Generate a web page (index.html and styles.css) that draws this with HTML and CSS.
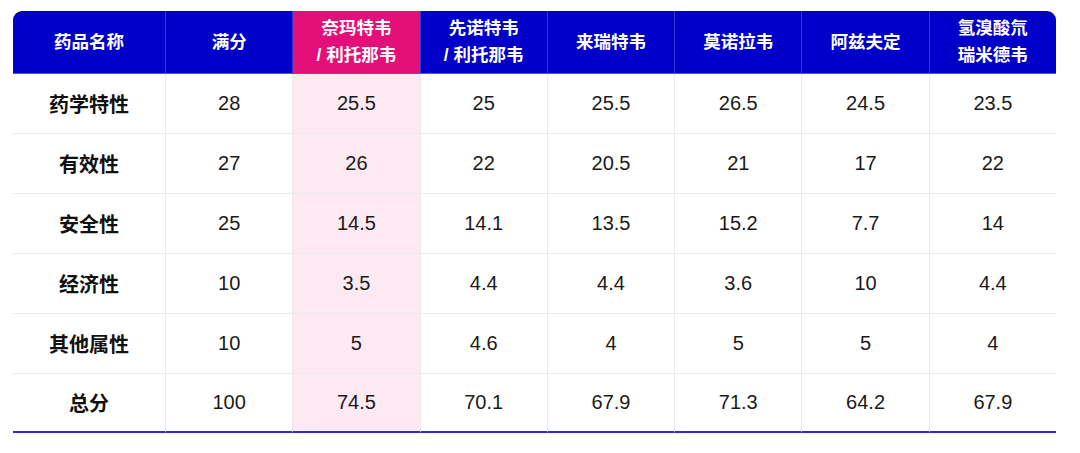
FILE: index.html
```html
<!DOCTYPE html>
<html lang="zh">
<head>
<meta charset="utf-8">
<title>药品评分</title>
<link rel="stylesheet" href="styles.css">
</head>
<body>
<div class="wrap">
<table class="score">
  <colgroup>
    <col class="c-name">
    <col span="7" class="c-val">
  </colgroup>
  <thead>
    <tr>
      <th>药品名称</th>
      <th>满分</th>
      <th class="hl">奈玛特韦<br>/ 利托那韦</th>
      <th>先诺特韦<br>/ 利托那韦</th>
      <th>来瑞特韦</th>
      <th>莫诺拉韦</th>
      <th>阿兹夫定</th>
      <th>氢溴酸氘<br>瑞米德韦</th>
    </tr>
  </thead>
  <tbody>
    <tr><th>药学特性</th><td>28</td><td class="hl">25.5</td><td>25</td><td>25.5</td><td>26.5</td><td>24.5</td><td>23.5</td></tr>
    <tr><th>有效性</th><td>27</td><td class="hl">26</td><td>22</td><td>20.5</td><td>21</td><td>17</td><td>22</td></tr>
    <tr><th>安全性</th><td>25</td><td class="hl">14.5</td><td>14.1</td><td>13.5</td><td>15.2</td><td>7.7</td><td>14</td></tr>
    <tr><th>经济性</th><td>10</td><td class="hl">3.5</td><td>4.4</td><td>4.4</td><td>3.6</td><td>10</td><td>4.4</td></tr>
    <tr><th>其他属性</th><td>10</td><td class="hl">5</td><td>4.6</td><td>4</td><td>5</td><td>5</td><td>4</td></tr>
    <tr><th>总分</th><td>100</td><td class="hl">74.5</td><td>70.1</td><td>67.9</td><td>71.3</td><td>64.2</td><td>67.9</td></tr>
  </tbody>
</table>
</div>
</body>
</html>
```

FILE: styles.css
```css
html, body {
  margin: 0;
  padding: 0;
  background: #ffffff;
}

body {
  font-family: "Liberation Sans", "Noto Sans CJK SC", sans-serif;
  color: #111111;
}

.wrap {
  padding: 11px 0 0 13px;
}

.score {
  width: 1043px;
  table-layout: fixed;
  border-collapse: separate;
  border-spacing: 0;
}

.c-name { width: 152px; }

.score thead th {
  height: 63px;
  padding: 0 4px;
  box-sizing: border-box;
  background: #0000c8;
  color: #ffffff;
  font-size: 17.5px;
  font-weight: 700;
  line-height: 27px;
  text-align: center;
  vertical-align: middle;
  border-left: 1px solid #3434d6;
  border-bottom: 1px solid #5656dc;
}

.score thead th:first-child {
  border-left: none;
  border-top-left-radius: 9px;
}

.score thead th:last-child {
  border-top-right-radius: 9px;
}

.score thead th.hl {
  background: #e40f78;
}

.score tbody th,
.score tbody td {
  height: 60px;
  box-sizing: border-box;
  text-align: center;
  vertical-align: middle;
  font-size: 20px;
  border-left: 1px solid #ebebeb;
  border-bottom: 1px solid #ebebeb;
  padding: 0;
}

.score tbody th {
  border-left: none;
  font-weight: 700;
  color: #111111;
}

.score tbody td {
  font-weight: 400;
  color: #1a1a1a;
}

.score tbody td.hl {
  background: #fce9f2;
}

.score tbody tr:last-child th,
.score tbody tr:last-child td {
  height: 59px;
  border-bottom: 2px solid #2a2ad8;
}
```
